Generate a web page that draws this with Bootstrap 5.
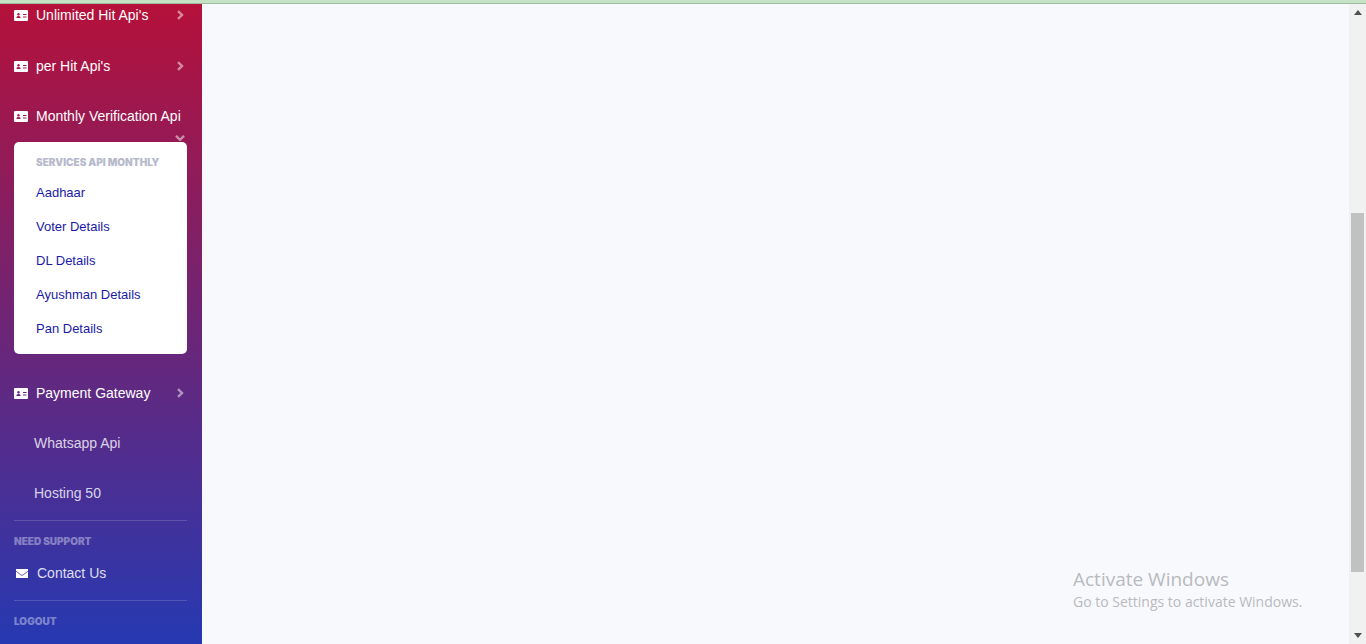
<!DOCTYPE html>
<html lang="en">
<head>
<meta charset="utf-8">
<meta name="viewport" content="width=device-width, initial-scale=1">
<title>Dashboard</title>
<link href="https://cdn.jsdelivr.net/npm/bootstrap@5.3.0/dist/css/bootstrap.min.css" rel="stylesheet">
<style>
  body { font-family: "Liberation Sans", Arial, sans-serif; background: #f8f9fd; }
  .top-strip { height: 4px; background: #c6e3c6; border-bottom: 1px solid #9dbb9f; }
  .side { width: 202px; background: linear-gradient(180deg, #b5113a 0%, #2639b2 100%); }
  .side-link { min-height: 50px; padding: 0 14px; gap: 8px; font-size: 14px; line-height: 20px; color: #fff; text-decoration: none; white-space: nowrap; }
  .side-link:hover { color: #fff; }
  .side-link.first-link { min-height: 37px; padding-bottom: 15px; }
  .side-link.plain { color: rgba(255,255,255,.8); padding-left: 34px; }
  .side-link.contact { padding-left: 15px; color: rgba(255,255,255,.85); }
  .chev { color: rgba(255,255,255,.5); margin: 0 4px 0 auto; }
  .chev-open { right: 17px; bottom: 0; }
  .submenu { margin: 1px 15px 14px 14px; padding: 13px 0 8px; border-radius: 5px; background: #fff; }
  .heading-xs { font-family: Inter, "Liberation Sans", sans-serif; font-weight: 900; font-size: 10px; line-height: 14px; text-transform: uppercase; margin: 0; white-space: nowrap; }
  .submenu .heading-xs { color: #b7b9cc; padding: 0 22px 7px; }
  .submenu a { display: block; padding: 7px 22px; font-size: 13px; line-height: 20px; color: #1a1aa6; text-decoration: none; }
  .side .rule { height: 1px; background: rgba(255,255,255,.16); margin: 2px 15px 0 14px; }
  .group-title { color: rgba(255,255,255,.4); padding: 13px 14px 0; }
  .watermark { right: 40px; bottom: 32px; width: 236px; font-family: "Open Sans", sans-serif; color: #b9babe; white-space: nowrap; }
  .watermark .wm-title { font-size: 19px; line-height: 25px; }
  .watermark .wm-text { font-size: 14px; line-height: 20px; }
  .track { width: 17px; background: #f1f1f1; }
  .track .arrow { height: 17px; }
  .thumb-lane { display: grid; grid-template-rows: 192fr 359fr 55fr; }
  .thumb { width: 13px; grid-row: 2; background: #c1c1c1; }
</style>
</head>
<body class="vh-100 overflow-hidden d-flex flex-column">
<svg class="d-none" aria-hidden="true">
  <symbol id="i-card" viewBox="0 0 14 11"><path fill="currentColor" fill-rule="evenodd" d="M1 0h12q1 0 1 1v9q0 1-1 1H1q-1 0-1-1V1q0-1 1-1zM4.500 3a1.300 1.300 0 1 0 .01 0zM2.500 8h4V7q-.5-1-2-1t-2 1zM9 4v1h3.500V4zM9 6.500v1h3.500v-1z"/></symbol>
  <symbol id="i-right" viewBox="0 0 7 10"><path d="M1 1.200 5 5 1 8.800" fill="none" stroke="currentColor" stroke-width="2.400"/></symbol>
  <symbol id="i-down" viewBox="0 0 10 6"><path d="M1 .8 5 4.800 9 .8" fill="none" stroke="currentColor" stroke-width="2.400"/></symbol>
  <symbol id="i-mail" viewBox="0 0 12 9"><path fill="currentColor" d="M0 0h12v9H0z"/><path d="M0 2.200 5 6q1 .7 2 0l5-3.800" fill="none" stroke="#4a44a4" stroke-width=".8"/></symbol>
</svg>
<div class="top-strip flex-shrink-0"></div>
<div class="d-flex flex-grow-1 overflow-hidden">
  <nav class="side flex-shrink-0 overflow-hidden" aria-label="Sidebar">
    <a class="side-link first-link d-flex align-items-center" href="#"><svg width="14" height="11"><use href="#i-card"/></svg>Unlimited Hit Api's<svg class="chev" width="7" height="10"><use href="#i-right"/></svg></a>
    <a class="side-link d-flex align-items-center" href="#"><svg width="14" height="11"><use href="#i-card"/></svg>per Hit Api's<svg class="chev" width="7" height="10"><use href="#i-right"/></svg></a>
    <a class="side-link d-flex align-items-center position-relative" href="#monthly" aria-expanded="true"><svg width="14" height="11"><use href="#i-card"/></svg>Monthly Verification Api<svg class="chev chev-open position-absolute m-0" width="10" height="6"><use href="#i-down"/></svg></a>
    <div class="submenu" id="monthly">
      <h6 class="heading-xs">Services Api Monthly</h6>
      <ul class="list-unstyled m-0">
        <li><a href="#">Aadhaar</a></li>
        <li><a href="#">Voter Details</a></li>
        <li><a href="#">DL Details</a></li>
        <li><a href="#">Ayushman Details</a></li>
        <li><a href="#">Pan Details</a></li>
      </ul>
    </div>
    <a class="side-link d-flex align-items-center" href="#"><svg width="14" height="11"><use href="#i-card"/></svg>Payment Gateway<svg class="chev" width="7" height="10"><use href="#i-right"/></svg></a>
    <a class="side-link plain d-flex align-items-center" href="#">Whatsapp Api</a>
    <a class="side-link plain d-flex align-items-center" href="#">Hosting 50</a>
    <div class="rule"></div>
    <h6 class="heading-xs group-title">Need Support</h6>
    <a class="side-link contact d-flex align-items-center" href="#"><svg class="text-white" width="14" height="9"><use href="#i-mail"/></svg>Contact Us</a>
    <div class="rule"></div>
    <h6 class="heading-xs group-title">Logout</h6>
  </nav>
  <main class="flex-grow-1 position-relative">
    <div class="watermark position-absolute">
      <div class="wm-title">Activate Windows</div>
      <div class="wm-text">Go to Settings to activate Windows.</div>
    </div>
  </main>
  <div class="track flex-shrink-0 d-flex flex-column align-items-center" aria-hidden="true">
    <div class="arrow d-flex align-items-center"><svg width="8" height="5"><path d="M0 5 4 0l4 5z" fill="#505050"/></svg></div>
    <div class="thumb-lane flex-grow-1">
      <div class="thumb"></div>
    </div>
    <div class="arrow d-flex align-items-center"><svg width="8" height="5"><path d="M0 0h8L4 5z" fill="#505050"/></svg></div>
  </div>
</div>
<script src="https://cdn.jsdelivr.net/npm/bootstrap@5.3.0/dist/js/bootstrap.bundle.min.js"></script>
</body>
</html>
